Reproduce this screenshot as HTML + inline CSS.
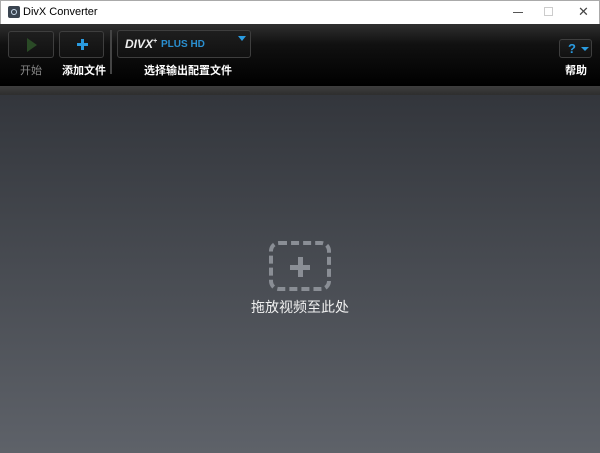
<!DOCTYPE html>
<html><head><style>
*{margin:0;padding:0;box-sizing:border-box}
body{width:600px;height:453px;overflow:hidden;font-family:"Liberation Sans","Noto Sans CJK SC",sans-serif;position:relative;background:#4a4e55}
.title{position:absolute;left:0;top:0;width:600px;height:24px;background:#fff;border:1px solid #aaa;border-bottom:none}
.title span{position:absolute;left:22px;top:5px;font-size:11px;color:#000}
.ico{position:absolute;left:7px;top:5px;width:12px;height:12px;background:#3a4450;border-radius:2px}
.ico:after{content:"";position:absolute;left:3px;top:3px;width:6px;height:6px;border:1px solid #cde;border-radius:50%;box-sizing:border-box}
.tb{position:absolute;left:0;top:24px;width:600px;height:62px;background:linear-gradient(#2f2f2f,#111 20px,#000)}
.btn{position:absolute;border:1px solid #3e3e3e;border-radius:3px;background:linear-gradient(#1e1e1e,#111)}
.lbl{position:absolute;font-size:11px;color:#fff;font-weight:bold;top:62px}
.bar{position:absolute;left:0;top:86px;width:600px;height:9px;background:linear-gradient(#3e3e3e,#2e2e2e)}
.main{position:absolute;left:0;top:95px;width:600px;height:358px;background:linear-gradient(#33363c,#5e6269)}
</style></head><body>
<div class="title"><div class="ico"></div><span>DivX Converter</span>
<div style="position:absolute;left:512px;top:11px;width:10px;height:1px;background:#555"></div>
<div style="position:absolute;left:543px;top:6px;width:9px;height:9px;border:1px solid #ccc"></div>
<div style="position:absolute;left:577px;top:3px;font-size:13px;color:#444">✕</div>
</div>
<div class="tb">
<div class="btn" style="left:8px;top:7px;width:46px;height:27px"><div style="position:absolute;left:18px;top:6px;border-left:10px solid #2a4a26;border-top:7px solid transparent;border-bottom:7px solid transparent"></div></div>
<div class="btn" style="left:59px;top:7px;width:45px;height:27px"><div style="position:absolute;left:17px;top:11px;width:11px;height:3px;background:#2a9be0"></div><div style="position:absolute;left:21px;top:7px;width:3px;height:11px;background:#2a9be0"></div></div>
<div style="position:absolute;left:110px;top:6px;width:2px;height:44px;background:#444"></div>
<div class="btn" style="left:117px;top:6px;width:134px;height:28px"><span style="position:absolute;left:7px;top:6px;font-size:12px;font-weight:bold;color:#eee;font-style:italic">DIVX<sup style="font-size:7px">+</sup></span><span style="position:absolute;left:43px;top:8px;font-size:10px;font-weight:bold;color:#2a8fd0">PLUS HD</span><div style="position:absolute;left:120px;top:5px;border-top:5px solid #2a9be0;border-left:4px solid transparent;border-right:4px solid transparent"></div></div>
<div class="btn" style="left:559px;top:15px;width:33px;height:19px"><span style="position:absolute;left:8px;top:1px;font-size:13px;font-weight:bold;color:#2a9be0">?</span><div style="position:absolute;left:21px;top:7px;border-top:4px solid #2a9be0;border-left:4px solid transparent;border-right:4px solid transparent"></div></div>
<div class="lbl" style="left:20px;top:38px;color:#888;font-weight:normal">开始</div>
<div class="lbl" style="left:62px;top:38px">添加文件</div>
<div class="lbl" style="left:144px;top:38px">选择输出配置文件</div>
<div class="lbl" style="left:565px;top:38px">帮助</div>
</div>
<div class="bar"></div>
<div class="main">
<div style="position:absolute;left:269px;top:146px;width:62px;height:50px;border:4px dashed #8a8e95;border-radius:10px"></div>
<div style="position:absolute;left:290px;top:170px;width:20px;height:5px;background:#8a8e95"></div>
<div style="position:absolute;left:298px;top:162px;width:5px;height:20px;background:#8a8e95"></div>
<div style="position:absolute;left:0;width:600px;top:202px;text-align:center;font-size:14px;color:#f0f0f0">拖放视频至此处</div>
</div>
</body></html>
